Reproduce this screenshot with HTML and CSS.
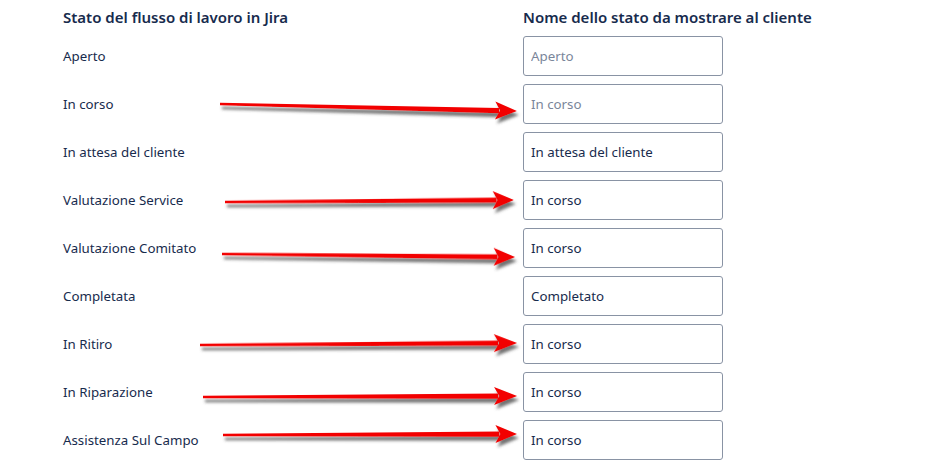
FILE: index.html
```html
<!DOCTYPE html>
<html lang="it">
<head>
  <meta charset="UTF-8" />
  <meta name="viewport" content="width=device-width, initial-scale=1.0"/>
  <title>Stati del flusso di lavoro</title>
  <link rel="stylesheet" href="styles.css">
</head>
<body>
  <div class="page">
    <div class="mapping">
      <div class="col-title">Stato del flusso di lavoro in Jira</div>
      <div class="col-title">Nome dello stato da mostrare al cliente</div>

      <div class="status">Aperto</div>
      <input class="field" type="text" placeholder="Aperto" />

      <div class="status">In corso</div>
      <input class="field" type="text" placeholder="In corso" />

      <div class="status">In attesa del cliente</div>
      <input class="field" type="text" value="In attesa del cliente" />

      <div class="status">Valutazione Service</div>
      <input class="field" type="text" value="In corso" />

      <div class="status">Valutazione Comitato</div>
      <input class="field" type="text" value="In corso" />

      <div class="status">Completata</div>
      <input class="field" type="text" value="Completato" />

      <div class="status">In Ritiro</div>
      <input class="field" type="text" value="In corso" />

      <div class="status">In Riparazione</div>
      <input class="field" type="text" value="In corso" />

      <div class="status">Assistenza Sul Campo</div>
      <input class="field" type="text" value="In corso" />
    </div>

    <!-- annotation arrows drawn over the screenshot -->
    <svg class="arrows" width="941" height="467" viewBox="0 0 941 467">
      <defs>
        <filter id="shadow" x="-5%" y="-100%" width="110%" height="300%">
          <feDropShadow dx="2" dy="4" stdDeviation="1.6" flood-color="#444" flood-opacity="0.75"/>
        </filter>
        <g id="arrow">
          <polygon points="0,-1.2 0,1.2 282,2.6 282,-2.6" />
          <polygon points="278,-9 300,0 278,9 283,0" />
        </g>
      </defs>
      <g fill="#f20000" filter="url(#shadow)">
        <use href="#arrow" transform="translate(220 104) rotate(1.35) scale(0.99 1)" />
        <use href="#arrow" transform="translate(225 202) rotate(-0.4) scale(0.963 1)" />
        <use href="#arrow" transform="translate(222 254) rotate(0.6) scale(0.977 1)" />
        <use href="#arrow" transform="translate(200 345) rotate(-0.36) scale(1.057 1)" />
        <use href="#arrow" transform="translate(203 397) rotate(-0.18) scale(1.047 1)" />
        <use href="#arrow" transform="translate(223 435) rotate(-0.19) scale(0.98 1)" />
      </g>
    </svg>
  </div>
</body>
</html>
```

FILE: styles.css
```css
:root {
  --text-color: #172b4d;
  --placeholder-color: #7a869a;
  --border-color: #8993a4;
  --font-size: 13.3px;
}

body {
  margin: 0;
  background-color: #ffffff;
  font-family: "Noto Sans", "Open Sans", sans-serif;
  color: var(--text-color);
  overflow: hidden;
}

.page {
  position: relative;
  width: 941px;
  height: 467px;
}

.mapping {
  display: grid;
  grid-template-columns: 460px max-content;
  row-gap: 8px;
  padding: 6px 0 0 63px;
}

.col-title {
  font-size: 15px;
  font-weight: 600;
  line-height: 22px;
  white-space: nowrap;
}

.status {
  align-self: center;
  font-size: var(--font-size);
}

.field {
  width: 200px;
  height: 40px;
  box-sizing: border-box;
  margin: 0;
  padding: 0 7px;
  border: 1px solid var(--border-color);
  border-radius: 3px;
  font-family: inherit;
  font-size: var(--font-size);
  color: var(--text-color);
  background-color: #ffffff;
}

.field::placeholder {
  color: var(--placeholder-color);
  opacity: 1;
}

.arrows {
  position: absolute;
  top: 0;
  left: 0;
  pointer-events: none;
}
```
